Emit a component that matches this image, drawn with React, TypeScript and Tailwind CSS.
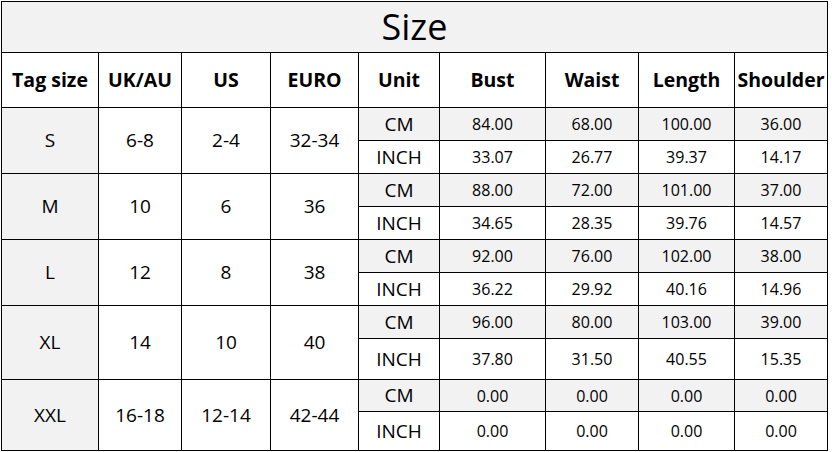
const sizes = [
  { tag: "S", uk: "6-8", us: "2-4", euro: "32-34", cm: ["84.00", "68.00", "100.00", "36.00"], inch: ["33.07", "26.77", "39.37", "14.17"] },
  { tag: "M", uk: "10", us: "6", euro: "36", cm: ["88.00", "72.00", "101.00", "37.00"], inch: ["34.65", "28.35", "39.76", "14.57"] },
  { tag: "L", uk: "12", us: "8", euro: "38", cm: ["92.00", "76.00", "102.00", "38.00"], inch: ["36.22", "29.92", "40.16", "14.96"] },
  { tag: "XL", uk: "14", us: "10", euro: "40", cm: ["96.00", "80.00", "103.00", "39.00"], inch: ["37.80", "31.50", "40.55", "15.35"] },
  { tag: "XXL", uk: "16-18", us: "12-14", euro: "42-44", cm: ["0.00", "0.00", "0.00", "0.00"], inch: ["0.00", "0.00", "0.00", "0.00"] },
];

const headers = ["Tag size", "UK/AU", "US", "EURO", "Unit", "Bust", "Waist", "Length", "Shoulder"];

export default function App() {
  return (
    <div className="min-h-[452px] bg-white pl-px pt-px text-black" style={{ fontFamily: '"Open Sans", "Noto Sans", sans-serif' }}>
      <div className="grid w-[827px] grid-cols-[96px_82px_88px_87px_80px_105px_92px_95px_92px] grid-rows-[50px_54px_32px_32px_32px_32px_32px_32px_32px_40px_31px_38px] gap-px bg-black p-px">
        <div className="col-span-9 flex items-center justify-center bg-[#f2f2f2] text-[36px] leading-none">Size</div>
        {headers.map((h) => (
          <div key={h} className="flex items-center justify-center whitespace-nowrap bg-white text-[19.5px] font-bold">
            {h}
          </div>
        ))}
        {sizes.map((s) => (
          <Group key={s.tag} s={s} />
        ))}
      </div>
    </div>
  );
}

function Group({ s }: { s: (typeof sizes)[number] }) {
  return (
    <>
      <div className="row-span-2 flex items-center justify-center bg-[#f2f2f2] text-[19px]">{s.tag}</div>
      <div className="row-span-2 flex items-center justify-center bg-white text-[19px]">{s.uk}</div>
      <div className="row-span-2 flex items-center justify-center bg-white text-[19px]">{s.us}</div>
      <div className="row-span-2 flex items-center justify-center bg-white text-[19px]">{s.euro}</div>
      <div className="flex items-center justify-center bg-[#f2f2f2] text-[19px]">CM</div>
      {s.cm.map((v, i) => (
        <div key={i} className="flex items-center justify-center bg-[#f2f2f2] text-[16px]">
          {v}
        </div>
      ))}
      <div className="col-start-5 flex items-center justify-center bg-white text-[19px]">INCH</div>
      {s.inch.map((v, i) => (
        <div key={i} className="flex items-center justify-center bg-white text-[16px]">
          {v}
        </div>
      ))}
    </>
  );
}
